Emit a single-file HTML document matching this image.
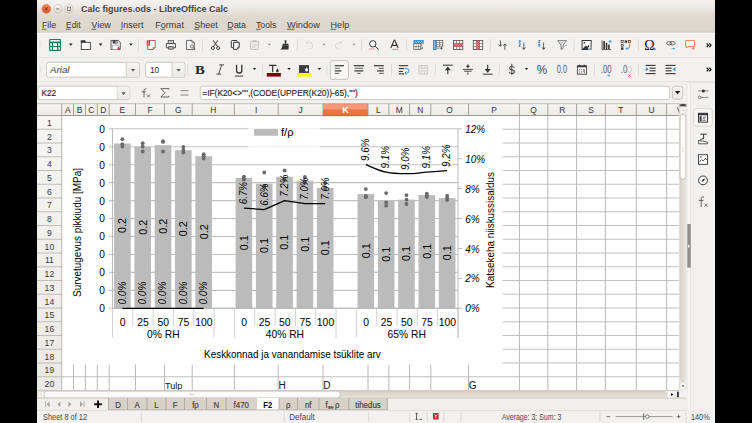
<!DOCTYPE html>
<html lang="en"><head><meta charset="utf-8"><title>Calc figures.ods - LibreOffice Calc</title>
<style>
html,body{margin:0;padding:0;background:#000;width:752px;height:423px;overflow:hidden}
svg{display:block}
svg text{font-family:"Liberation Sans",sans-serif}
</style></head><body>
<svg width="752" height="423" viewBox="0 0 752 423">
<defs>
<linearGradient id="gTitle" x1="0" y1="0" x2="0" y2="1"><stop offset="0" stop-color="#f4f2ef"/><stop offset="0.15" stop-color="#f0ede9"/><stop offset="0.5" stop-color="#e0d9d0"/><stop offset="1" stop-color="#ddd6cd"/></linearGradient>
<linearGradient id="gHdr" x1="0" y1="0" x2="0" y2="1"><stop offset="0" stop-color="#f6f5f3"/><stop offset="1" stop-color="#eceae6"/></linearGradient>
<linearGradient id="gSel" x1="0" y1="0" x2="0" y2="1"><stop offset="0" stop-color="#f28a5f"/><stop offset="1" stop-color="#ec6a3a"/></linearGradient>
<linearGradient id="gClose" x1="0" y1="0" x2="0" y2="1"><stop offset="0" stop-color="#f58a61"/><stop offset="1" stop-color="#e2562a"/></linearGradient>
<linearGradient id="gBtn" x1="0" y1="0" x2="0" y2="1"><stop offset="0" stop-color="#fbfaf9"/><stop offset="1" stop-color="#d9d3ca"/></linearGradient>
<linearGradient id="gScrollV" x1="0" y1="0" x2="1" y2="0"><stop offset="0" stop-color="#d8d1c8"/><stop offset="1" stop-color="#ebe6e0"/></linearGradient>
<linearGradient id="gScrollH" x1="0" y1="0" x2="0" y2="1"><stop offset="0" stop-color="#d6cfc6"/><stop offset="1" stop-color="#e9e4de"/></linearGradient>
<clipPath id="win"><rect x="37" y="0" width="678" height="423"/></clipPath>
</defs>
<rect x="0.00" y="0.00" width="752.00" height="423.00" fill="#000" />
<g clip-path="url(#win)">
<rect x="37.00" y="0.00" width="678.00" height="423.00" fill="#f3f1ef" />
<rect x="37.00" y="0.00" width="678.00" height="32.30" fill="url(#gTitle)" />
<line x1="37.00" y1="32.30" x2="715.00" y2="32.30" stroke="#c9c1b6" stroke-width="0.8" />
<line x1="37.00" y1="33.30" x2="715.00" y2="33.30" stroke="#fbfaf9" stroke-width="1" />
<circle cx="46.3" cy="8.8" r="4.4" fill="url(#gClose)" stroke="#cf5a30" stroke-width="0.5"/>
<path d="M44.7 7.2l3.2 3.2M47.9 7.2l-3.2 3.2" fill="none" stroke="#7a2c10" stroke-width="0.9" />
<circle cx="57.8" cy="8.8" r="4.3" fill="url(#gBtn)" stroke="#c2bbb1" stroke-width="0.6"/>
<circle cx="69.0" cy="8.8" r="4.3" fill="url(#gBtn)" stroke="#c2bbb1" stroke-width="0.6"/>
<line x1="56.00" y1="8.90" x2="59.60" y2="8.90" stroke="#7c766e" stroke-width="0.9" />
<rect x="67.40" y="7.10" width="3.20" height="3.40" fill="none" stroke="#7c766e" stroke-width="0.8" />
<text x="81.00" y="12.30" font-size="9.6" fill="#4a4640" font-weight="bold" textLength="147.00" lengthAdjust="spacingAndGlyphs" >Calc figures.ods - LibreOffice Calc</text>
<text x="41.90" y="28.10" font-size="9.7" fill="#3a3834" textLength="14.40" lengthAdjust="spacingAndGlyphs" >File</text>
<line x1="41.90" y1="29.30" x2="46.50" y2="29.30" stroke="#3a3834" stroke-width="0.7" />
<text x="66.00" y="28.10" font-size="9.7" fill="#3a3834" textLength="14.60" lengthAdjust="spacingAndGlyphs" >Edit</text>
<line x1="66.00" y1="29.30" x2="70.80" y2="29.30" stroke="#3a3834" stroke-width="0.7" />
<text x="91.30" y="28.10" font-size="9.7" fill="#3a3834" textLength="19.60" lengthAdjust="spacingAndGlyphs" >View</text>
<line x1="91.30" y1="29.30" x2="96.30" y2="29.30" stroke="#3a3834" stroke-width="0.7" />
<text x="120.80" y="28.10" font-size="9.7" fill="#3a3834" textLength="22.60" lengthAdjust="spacingAndGlyphs" >Insert</text>
<line x1="120.80" y1="29.30" x2="122.40" y2="29.30" stroke="#3a3834" stroke-width="0.7" />
<text x="155.30" y="28.10" font-size="9.7" fill="#3a3834" textLength="28.60" lengthAdjust="spacingAndGlyphs" >Format</text>
<line x1="160.70" y1="29.30" x2="165.10" y2="29.30" stroke="#3a3834" stroke-width="0.7" />
<text x="194.30" y="28.10" font-size="9.7" fill="#3a3834" textLength="23.40" lengthAdjust="spacingAndGlyphs" >Sheet</text>
<line x1="194.30" y1="29.30" x2="199.30" y2="29.30" stroke="#3a3834" stroke-width="0.7" />
<text x="227.30" y="28.10" font-size="9.7" fill="#3a3834" textLength="18.60" lengthAdjust="spacingAndGlyphs" >Data</text>
<line x1="227.30" y1="29.30" x2="232.70" y2="29.30" stroke="#3a3834" stroke-width="0.7" />
<text x="256.00" y="28.10" font-size="9.7" fill="#3a3834" textLength="20.40" lengthAdjust="spacingAndGlyphs" >Tools</text>
<line x1="256.00" y1="29.30" x2="260.80" y2="29.30" stroke="#3a3834" stroke-width="0.7" />
<text x="287.00" y="28.10" font-size="9.7" fill="#3a3834" textLength="32.80" lengthAdjust="spacingAndGlyphs" >Window</text>
<line x1="287.00" y1="29.30" x2="294.60" y2="29.30" stroke="#3a3834" stroke-width="0.7" />
<text x="330.60" y="28.10" font-size="9.7" fill="#3a3834" textLength="18.60" lengthAdjust="spacingAndGlyphs" >Help</text>
<line x1="330.60" y1="29.30" x2="336.00" y2="29.30" stroke="#3a3834" stroke-width="0.7" />
<line x1="37.00" y1="57.60" x2="715.00" y2="57.60" stroke="#e2ded9" stroke-width="0.8" />
<line x1="37.00" y1="81.60" x2="715.00" y2="81.60" stroke="#e2ded9" stroke-width="0.8" />
<line x1="39.50" y1="42.00" x2="41.50" y2="42.00" stroke="#d8d4ce" stroke-width="0.6" />
<line x1="39.50" y1="43.60" x2="41.50" y2="43.60" stroke="#d8d4ce" stroke-width="0.6" />
<line x1="39.50" y1="45.20" x2="41.50" y2="45.20" stroke="#d8d4ce" stroke-width="0.6" />
<line x1="39.50" y1="46.80" x2="41.50" y2="46.80" stroke="#d8d4ce" stroke-width="0.6" />
<line x1="39.50" y1="67.00" x2="41.50" y2="67.00" stroke="#d8d4ce" stroke-width="0.6" />
<line x1="39.50" y1="68.60" x2="41.50" y2="68.60" stroke="#d8d4ce" stroke-width="0.6" />
<line x1="39.50" y1="70.20" x2="41.50" y2="70.20" stroke="#d8d4ce" stroke-width="0.6" />
<line x1="39.50" y1="71.80" x2="41.50" y2="71.80" stroke="#d8d4ce" stroke-width="0.6" />
<line x1="138.40" y1="39.50" x2="138.40" y2="50.80" stroke="#dedad5" stroke-width="0.9" />
<line x1="202.50" y1="39.50" x2="202.50" y2="50.80" stroke="#dedad5" stroke-width="0.9" />
<line x1="297.30" y1="39.50" x2="297.30" y2="50.80" stroke="#dedad5" stroke-width="0.9" />
<line x1="361.50" y1="39.50" x2="361.50" y2="50.80" stroke="#dedad5" stroke-width="0.9" />
<line x1="406.60" y1="39.50" x2="406.60" y2="50.80" stroke="#dedad5" stroke-width="0.9" />
<line x1="490.30" y1="39.50" x2="490.30" y2="50.80" stroke="#dedad5" stroke-width="0.9" />
<line x1="574.00" y1="39.50" x2="574.00" y2="50.80" stroke="#dedad5" stroke-width="0.9" />
<line x1="638.50" y1="39.50" x2="638.50" y2="50.80" stroke="#dedad5" stroke-width="0.9" />
<line x1="187.80" y1="63.50" x2="187.80" y2="75.50" stroke="#dedad5" stroke-width="0.9" />
<line x1="262.60" y1="63.50" x2="262.60" y2="75.50" stroke="#dedad5" stroke-width="0.9" />
<line x1="327.00" y1="63.50" x2="327.00" y2="75.50" stroke="#dedad5" stroke-width="0.9" />
<line x1="391.50" y1="63.50" x2="391.50" y2="75.50" stroke="#dedad5" stroke-width="0.9" />
<line x1="435.30" y1="63.50" x2="435.30" y2="75.50" stroke="#dedad5" stroke-width="0.9" />
<line x1="499.40" y1="63.50" x2="499.40" y2="75.50" stroke="#dedad5" stroke-width="0.9" />
<line x1="594.40" y1="63.50" x2="594.40" y2="75.50" stroke="#dedad5" stroke-width="0.9" />
<line x1="638.50" y1="63.50" x2="638.50" y2="75.50" stroke="#dedad5" stroke-width="0.9" />
<g transform="translate(49.10 39.00)" ><rect x="0" y="0" width="11.9" height="12" rx="1.1" fill="#1b7f5f"/><rect x="1.2" y="1.1" width="9.5" height="1.4" fill="#fff"/><rect x="1.2" y="4.2" width="1.5" height="2.8" fill="#fff"/><rect x="4" y="4.2" width="3.9" height="2.8" fill="#fff"/><rect x="9.2" y="4.2" width="1.5" height="2.8" fill="#fff"/><rect x="1.2" y="8.1" width="1.5" height="2.7" fill="#fff"/><rect x="4" y="8.1" width="3.9" height="2.7" fill="#fff"/><rect x="9.2" y="8.1" width="1.5" height="2.7" fill="#fff"/></g>
<path d="M69.00 43.55 h3.60 l-1.80 2.10 z" fill="#1e1e1e" />
<g transform="translate(80.80 40.00)" ><rect x="0.45" y="2.3" width="9.1" height="7.2" fill="#fcfcfc" stroke="#343434" stroke-width="0.85"/><path d="M0 0.2h4.2l1.2 2.1h-5.4z" fill="#343434"/></g>
<path d="M98.80 43.55 h3.60 l-1.80 2.10 z" fill="#1e1e1e" />
<g transform="translate(110.60 40.00)" ><path d="M0.45 0.45h7.4l1.8 1.8v7.3h-9.2z" fill="#f6f6f6" stroke="#444" stroke-width="0.85"/><rect x="2.1" y="0.5" width="4.8" height="3.1" fill="#3c3c3c"/><rect x="5" y="1" width="1.1" height="2" fill="#e8e8e8"/><rect x="1.9" y="5.6" width="6.2" height="3.9" fill="#fff" stroke="#8a8a8a" stroke-width="0.5"/><circle cx="8.1" cy="8.4" r="1.25" fill="#e8222c"/></g>
<path d="M129.10 43.55 h3.60 l-1.80 2.10 z" fill="#1e1e1e" />
<g transform="translate(146.50 40.00)" ><path d="M2.6 0.5h6.1v6.9l-2.1 2.1h-5.4v-3.6" fill="#fff" stroke="#d8232d" stroke-width="0.8"/><path d="M8.6 7.2h-2.2v2.2z" fill="#d8232d"/><rect x="0.2" y="0.5" width="3.3" height="5.2" fill="#d8232d"/><path d="M1 4.8l0.85-3.2 0.85 3.2M1.3 3.7h1.1" stroke="#fff" stroke-width="0.4" fill="none"/></g>
<g transform="translate(165.90 40.00)" ><rect x="2.3" y="0.45" width="5.4" height="3.2" fill="#fff" stroke="#444" stroke-width="0.8"/><path d="M0.45 3.6h9.1v4.2h-9.1z" fill="#fafafa" stroke="#3a3a3a" stroke-width="0.9"/><path d="M2.6 1.6h4.8M2.6 2.6h4.8" stroke="#777" stroke-width="0.45"/><rect x="2.3" y="6.3" width="5.4" height="3.2" fill="#3a3a3a"/><rect x="3" y="7.4" width="4" height="1.1" fill="#fff"/></g>
<g transform="translate(186.10 40.00)" ><path d="M0.45 0.45h5.4l2.4 2.4v6.7h-7.8z" fill="#fdfdfd" stroke="#444" stroke-width="0.8"/><path d="M5.85 0.45v2.4h2.4" fill="none" stroke="#444" stroke-width="0.7"/><circle cx="5.9" cy="6.5" r="1.6" fill="#fff" stroke="#444" stroke-width="0.75"/><path d="M7.1 7.7l1.9 1.9" stroke="#444" stroke-width="0.9"/></g>
<g transform="translate(211.00 40.00)" ><path d="M2.2 0.3l4.6 6.6M6.8 0.3l-4.6 6.6" stroke="#343434" stroke-width="1" fill="none"/><circle cx="1.9" cy="8" r="1.5" fill="none" stroke="#343434" stroke-width="0.9"/><circle cx="7.1" cy="8" r="1.5" fill="none" stroke="#343434" stroke-width="0.9"/></g>
<g transform="translate(230.80 40.00)" ><rect x="0.5" y="0.5" width="5.8" height="7.2" rx="0.8" fill="#fff" stroke="#343434" stroke-width="1"/><path d="M2.8 2.3h5.6v5l-2 2h-3.6z" fill="#fff" stroke="#343434" stroke-width="1"/><path d="M8.4 7.3h-2v2z" fill="#343434"/></g>
<g transform="translate(249.90 40.00)" ><rect x="0.5" y="1.2" width="8" height="8.2" rx="0.8" fill="#f0efee" stroke="#c2bfbb" stroke-width="1"/><rect x="2.6" y="0.2" width="3.8" height="2" fill="#c2bfbb"/><path d="M2 4.2h5M2 5.8h5M2 7.4h3" stroke="#c2bfbb" stroke-width="0.6"/></g>
<path d="M267.70 43.65 h3.20 l-1.60 1.90 z" fill="#908d8a" />
<g transform="translate(280.00 40.00)" ><path d="M4.6 0.2h1.8l-0.2 3.6h-1.4z" fill="#343434"/><path d="M2.6 3.8h5.8l0.2 2h-6.2z" fill="#343434"/><path d="M2.2 5.8h6.6l-0.4 3.8h-8.2c1.6-0.8 2-2 2-3.8z" fill="#343434"/></g>
<g transform="translate(305.00 40.00)" ><path d="M1.2 2.6h3.4a3 3 0 0 1 0 6.4h-1.6" fill="none" stroke="#d4d1cd" stroke-width="0.85"/><path d="M2.8 0.6l-2 2 2 2" fill="none" stroke="#d4d1cd" stroke-width="0.85"/></g>
<path d="M322.40 43.65 h3.20 l-1.60 1.90 z" fill="#908d8a" />
<g transform="translate(335.20 40.00)" ><path d="M6.4 2.6h-3a3 3 0 0 0 0 6.4h1.6" fill="none" stroke="#d4d1cd" stroke-width="0.85"/><path d="M4.8 0.6l2 2-2 2" fill="none" stroke="#d4d1cd" stroke-width="0.85"/></g>
<path d="M352.40 43.65 h3.20 l-1.60 1.90 z" fill="#908d8a" />
<g transform="translate(368.80 40.00)" ><circle cx="4" cy="3.8" r="3.2" fill="#fdfdfd" stroke="#343434" stroke-width="1"/><path d="M6.3 6.2l3.4 3.3" stroke="#343434" stroke-width="1"/><path d="M0.4 9h1.2M2.4 9h1.2M4.4 9h1.2" stroke="#f0683c" stroke-width="0.9"/></g>
<g transform="translate(390.20 40.00)" ><path d="M0.6 8l3.4-7.6h0.6l3.4 7.6M2 5.4h4.6" fill="none" stroke="#343434" stroke-width="1.1"/><path d="M2.4 9.4h1.2M4.4 9.4h1.2M6.4 9.4h1.2" stroke="#2aa65a" stroke-width="1"/></g>
<g transform="translate(413.50 40.00)" ><rect x="0.3" y="3.6" width="7" height="6" fill="#fff" stroke="#4a4a4a" stroke-width="0.7"/><path d="M0.3 6.6h7M2.6 3.6v6M5 3.6v6" stroke="#4a4a4a" stroke-width="0.55"/><path d="M8.4 4.4v2" stroke="#4a4a4a" stroke-width="0.6"/><rect x="0" y="0" width="10.2" height="3.8" fill="#2a93e8"/><path d="M1 2.3l1-.9 1 .9 1-.9 1 .9 1-.9 1 .9 1-.9 1 .9" stroke="#fff" stroke-width="0.55" fill="none"/><path d="M6.6 8.2h2.8M8.4 7.2l1.1 1-1.1 1" stroke="#4a4a4a" stroke-width="0.65" fill="none"/></g>
<g transform="translate(433.00 40.00)" ><rect x="3.4" y="0.4" width="6.4" height="6.4" fill="#fff" stroke="#4a4a4a" stroke-width="0.7"/><path d="M3.4 2.6h6.4M3.4 4.7h6.4M6.6 0.4v6.4" stroke="#4a4a4a" stroke-width="0.55"/><path d="M4 8.4h2.4" stroke="#4a4a4a" stroke-width="0.6"/><rect x="0" y="0" width="3.6" height="10" fill="#2a93e8"/><path d="M2.1 1l-.8 1 .8 1-.8 1 .8 1-.8 1 .8 1-.8 1 .8 1" stroke="#fff" stroke-width="0.55" fill="none"/><path d="M7 8.4h2.8M8.4 7v2.8" stroke="#4a4a4a" stroke-width="0.7" fill="none"/></g>
<g transform="translate(453.00 40.00)" ><rect x="0.4" y="0.4" width="9.4" height="9.2" fill="#fff" stroke="#4a4a4a" stroke-width="0.8"/><path d="M0.4 3.4h9.4M0.4 6.6h9.4M3.5 0.4v9.2M6.7 0.4v9.2" stroke="#4a4a4a" stroke-width="0.6"/><rect x="0.9" y="3.5" width="8.4" height="3" fill="#e6404f"/><path d="M1.4 5.3l1-.8 1 .8 1-.8 1 .8 1-.8 1 .8 1-.8" stroke="#fff" stroke-width="0.5" fill="none"/></g>
<g transform="translate(472.90 40.00)" ><rect x="0.4" y="0.4" width="9.4" height="9.2" fill="#fff" stroke="#4a4a4a" stroke-width="0.8"/><path d="M0.4 3.4h9.4M0.4 6.6h9.4M3.5 0.4v9.2M6.7 0.4v9.2" stroke="#4a4a4a" stroke-width="0.6"/><rect x="3.6" y="0.9" width="3" height="8.2" fill="#e6404f"/><path d="M5.4 1.4l-.8 1 .8 1-.8 1 .8 1-.8 1 .8 1-.8 1" stroke="#fff" stroke-width="0.5" fill="none"/></g>
<g transform="translate(498.00 40.00)" ><path d="M2.4 0.4v5.6M0.7 4.4l1.7 1.9 1.7-1.9" fill="none" stroke="#343434" stroke-width="0.8"/><path d="M6.9 9.8v-5.8M5.2 5.8l1.7-1.9 1.7 1.9" fill="none" stroke="#343434" stroke-width="0.8"/></g>
<g transform="translate(518.50 40.00)" ><rect x="0.3" y="0.2" width="1.9" height="2.5" fill="#2a93e8"/><path d="M0.4 3.9h1.7l-1.7 2.4h1.7" fill="none" stroke="#343434" stroke-width="0.65"/><path d="M5.4 2.6v6.8M3.7 7.5l1.7 1.9 1.7-1.9" fill="none" stroke="#343434" stroke-width="0.8"/></g>
<g transform="translate(538.00 40.00)" ><path d="M0.4 0.5h1.7l-1.7 2.3h1.7" fill="none" stroke="#343434" stroke-width="0.65"/><rect x="0.3" y="3.9" width="1.9" height="2.6" fill="#2a93e8"/><path d="M5.6 2.6v6.8M3.9 7.5l1.7 1.9 1.7-1.9" fill="none" stroke="#343434" stroke-width="0.8"/></g>
<g transform="translate(557.30 40.00)" ><path d="M0.5 0.7h8.6l-3.3 4.3v3.4l-2 1.1v-4.5z" fill="#fdfdfd" stroke="#4a4a4a" stroke-width="0.75"/><path d="M2.9 3.3l.8-.8.8.8.8-.8.8.8" stroke="#4a4a4a" stroke-width="0.5" fill="none"/><path d="M7.7 4.7l.9 1.1.9-1.1" stroke="#4a4a4a" stroke-width="0.55" fill="none"/></g>
<g transform="translate(581.60 40.00)" ><rect x="0.5" y="0.5" width="9" height="9" fill="#fff" stroke="#343434" stroke-width="1"/><path d="M0.8 9l3.4-3.6 1.4 1.4 2-2.2v4.4z" fill="#343434"/><circle cx="2.8" cy="2.8" r="0.9" fill="#343434"/><path d="M6.6 7.2h3.2v2.4h-3.2z" fill="#f3f1ef"/><path d="M7 8.3h1.4v-1.1l1.8 1.3-1.8 1.3v-1z" fill="#2a93e8"/></g>
<g transform="translate(601.50 40.00)" ><path d="M0.6 0.4v9.2h9" fill="none" stroke="#343434" stroke-width="0.8"/><rect x="1.8" y="1" width="1.6" height="8" fill="#343434"/><rect x="4.2" y="3" width="1.6" height="6" fill="#343434"/><rect x="6.6" y="4.6" width="1.6" height="4.4" fill="#343434"/><path d="M8.6 0v3M7.1 1.5h3" stroke="#2a93e8" stroke-width="0.9"/></g>
<g transform="translate(620.90 40.00)" ><rect x="0.3" y="0.6" width="2" height="2" fill="none" stroke="#343434" stroke-width="0.7"/><rect x="3.8" y="0.4" width="2.4" height="2.4" fill="#343434"/><rect x="7.4" y="0.6" width="2" height="2" fill="none" stroke="#343434" stroke-width="0.7"/><rect x="0.3" y="4.2" width="2" height="2" fill="none" stroke="#343434" stroke-width="0.7"/><rect x="0.1" y="7.4" width="2.4" height="2.4" fill="#343434"/><path d="M8.6 3.6v3.2a1.8 1.8 0 0 1-1.8 1.8h-1.6M6.2 7.4l-1.2 1.2 1.2 1.2" fill="none" stroke="#2a93e8" stroke-width="0.9"/></g>
<text x="644.20" y="49.70" font-size="14" fill="#161616" style="font-family:'Liberation Serif'" >Ω</text>
<path d="M654 47.4l2.3 1.5-2.3 1.5z" fill="#2a93e8" />
<g transform="translate(665.90 41.00)" ><ellipse cx="3.2" cy="2.2" rx="2.6" ry="1.7" fill="none" stroke="#555" stroke-width="0.8"/><ellipse cx="6.6" cy="2.2" rx="2.6" ry="1.7" fill="none" stroke="#555" stroke-width="0.8"/><path d="M5.6 7.2h1.8v-1l1.8 1.3-1.8 1.3v-1h-1.8z" fill="#2a93e8"/></g>
<g transform="translate(685.00 40.00)" ><path d="M0.6 0.6h9v5.8h-6.6l-1.2 1.6v-1.6h-1.2z" fill="#fdfdfd" stroke="#f0683c" stroke-width="0.85"/><path d="M8.2 6.9v2.8M6.8 8.3h2.8" stroke="#f0683c" stroke-width="0.8"/></g>
<path d="M706.7 43.3l1.7 1.9-1.7 1.9M709.3 43.3l1.7 1.9-1.7 1.9" fill="none" stroke="#111" stroke-width="1.25" />
<path d="M706.7 67.6l1.7 1.9-1.7 1.9M709.3 67.6l1.7 1.9-1.7 1.9" fill="none" stroke="#111" stroke-width="1.25" />
<rect x="46.40" y="62.40" width="93.00" height="14.80" fill="#ffffff" stroke="#c3bcb1" stroke-width="0.8" rx="2.2" />
<path d="M126.30 62.80 h10.50 a2.2 2.2 0 0 1 2.2 2.2 v9.60 a2.2 2.2 0 0 1 -2.2 2.2 h-10.50 z" fill="url(#gHdr)" />
<line x1="126.30" y1="62.80" x2="126.30" y2="76.80" stroke="#c9c3b9" stroke-width="0.8" />
<path d="M130.85 68.90 h4.40 l-2.20 2.60 z" fill="#555" />
<text x="50.00" y="73.00" font-size="9" fill="#3a3a3a" font-style="italic" textLength="19.50" lengthAdjust="spacingAndGlyphs" >Arial</text>
<rect x="145.50" y="62.40" width="39.40" height="14.80" fill="#ffffff" stroke="#c3bcb1" stroke-width="0.8" rx="2.2" />
<path d="M172.10 62.80 h10.20 a2.2 2.2 0 0 1 2.2 2.2 v9.60 a2.2 2.2 0 0 1 -2.2 2.2 h-10.20 z" fill="url(#gHdr)" />
<line x1="172.10" y1="62.80" x2="172.10" y2="76.80" stroke="#c9c3b9" stroke-width="0.8" />
<path d="M176.50 68.90 h4.40 l-2.20 2.60 z" fill="#555" />
<text x="149.90" y="72.80" font-size="9" fill="#2a2a2a" textLength="9.20" lengthAdjust="spacingAndGlyphs" >10</text>
<text x="194.90" y="73.70" font-size="13.2" fill="#262626" font-weight="bold" textLength="9.80" lengthAdjust="spacingAndGlyphs" style="font-family:'Liberation Serif'" >B</text>
<path d="M219.2 64.9h4.8M216.4 74.1h4.8M221.8 64.9l-3.2 9.2" fill="none" stroke="#3c3c3c" stroke-width="0.9" />
<path d="M236.6 64.8v5.6a2.6 2.6 0 0 0 5.2 0v-5.6" fill="none" stroke="#333" stroke-width="1.3" />
<line x1="234.90" y1="76.10" x2="243.30" y2="76.10" stroke="#333" stroke-width="0.9" />
<path d="M252.70 67.95 h3.60 l-1.80 2.10 z" fill="#1e1e1e" />
<path d="M269 65.4h7.4M272.7 65.4v6.8" fill="none" stroke="#333" stroke-width="1.2" />
<path d="M277.4 68.6c.9 1.2 1.3 1.8 1.3 2.5a1.3 1.3 0 0 1-2.6 0c0-.7.4-1.3 1.3-2.5z" fill="#333" />
<rect x="266.80" y="73.00" width="14.00" height="3.60" fill="#7b0000" />
<path d="M287.30 67.95 h3.60 l-1.80 2.10 z" fill="#1e1e1e" />
<rect x="299.00" y="65.10" width="10.00" height="7.60" fill="#3c3c3c" />
<path d="M306.6 67.2c1 1.4 1.5 2.1 1.5 2.9a1.5 1.5 0 0 1-3 0c0-.8.5-1.5 1.5-2.9z" fill="#fff" />
<line x1="299.00" y1="72.40" x2="309.00" y2="72.40" stroke="#1a1a6a" stroke-width="0.7" />
<rect x="296.90" y="73.00" width="14.20" height="3.60" fill="#ffff00" />
<path d="M317.60 67.95 h3.60 l-1.80 2.10 z" fill="#1e1e1e" />
<rect x="330.30" y="60.60" width="18.20" height="18.80" fill="#f8f7f6" stroke="#bdb5aa" stroke-width="0.8" rx="2.4" />
<line x1="334.80" y1="65.70" x2="344.00" y2="65.70" stroke="#2e2e2e" stroke-width="1.15" />
<line x1="334.80" y1="68.30" x2="339.80" y2="68.30" stroke="#6e6e6e" stroke-width="1.15" />
<line x1="334.80" y1="70.90" x2="341.40" y2="70.90" stroke="#2e2e2e" stroke-width="1.15" />
<line x1="334.80" y1="73.40" x2="339.20" y2="73.40" stroke="#6e6e6e" stroke-width="1.15" />
<line x1="353.80" y1="65.70" x2="364.00" y2="65.70" stroke="#2e2e2e" stroke-width="1.15" />
<line x1="354.80" y1="68.30" x2="363.00" y2="68.30" stroke="#6e6e6e" stroke-width="1.15" />
<line x1="354.40" y1="70.90" x2="363.40" y2="70.90" stroke="#2e2e2e" stroke-width="1.15" />
<line x1="357.20" y1="73.40" x2="360.60" y2="73.40" stroke="#6e6e6e" stroke-width="1.15" />
<line x1="374.00" y1="65.70" x2="383.80" y2="65.70" stroke="#2e2e2e" stroke-width="1.15" />
<line x1="378.60" y1="68.30" x2="383.80" y2="68.30" stroke="#6e6e6e" stroke-width="1.15" />
<line x1="377.00" y1="70.90" x2="383.80" y2="70.90" stroke="#2e2e2e" stroke-width="1.15" />
<line x1="379.20" y1="73.40" x2="383.80" y2="73.40" stroke="#6e6e6e" stroke-width="1.15" />
<line x1="398.80" y1="65.70" x2="408.20" y2="65.70" stroke="#343434" stroke-width="1.1" />
<line x1="398.80" y1="68.60" x2="404.20" y2="68.60" stroke="#343434" stroke-width="1.1" />
<line x1="398.80" y1="71.50" x2="402.80" y2="71.50" stroke="#343434" stroke-width="1.1" />
<line x1="398.80" y1="73.90" x2="404.20" y2="73.90" stroke="#343434" stroke-width="1.1" />
<path d="M405 68.6h1.8a2 2 0 0 1 0 4.4h-1.6M406.4 71.4l-1.4 1.6 1.4 1.6" fill="none" stroke="#2a93e8" stroke-width="1" />
<g transform="translate(418.50 65.00)" ><rect x="0.4" y="0.4" width="8.6" height="8.6" fill="#efeeec" stroke="#c4c1bd" stroke-width="0.8"/><path d="M0.4 3.2h8.6M0.4 6.2h8.6M3.3 0.4v2.8M6.1 0.4v2.8M3.3 6.2v2.8M6.1 6.2v2.8" stroke="#c4c1bd" stroke-width="0.6"/><path d="M3.4 4.7h.8M5.2 4.7h.8" stroke="#c4c1bd" stroke-width="0.8"/></g>
<line x1="442.90" y1="65.20" x2="452.80" y2="65.20" stroke="#343434" stroke-width="1" />
<path d="M447.8 74.2v-6.2M446 69.6l1.8-2.2 1.8 2.2z" fill="#343434" stroke="#343434" stroke-width="1.1" />
<line x1="462.90" y1="69.40" x2="472.90" y2="69.40" stroke="#343434" stroke-width="0.9" />
<path d="M467.9 64.2v3M466.5 66l1.4 1.6 1.4-1.6z" fill="#343434" stroke="#343434" stroke-width="0.9" />
<line x1="464.20" y1="71.20" x2="471.60" y2="71.20" stroke="#343434" stroke-width="0.9" />
<path d="M467.9 74.8v-2.4" fill="none" stroke="#343434" stroke-width="0.9" />
<line x1="482.90" y1="74.20" x2="492.50" y2="74.20" stroke="#343434" stroke-width="1" />
<path d="M487.7 64.8v6.2M485.9 69.6l1.8 2.2 1.8-2.2z" fill="#343434" stroke="#343434" stroke-width="1.1" />
<text x="508.30" y="73.60" font-size="11.5" fill="#3a3a3a" textLength="7.00" lengthAdjust="spacingAndGlyphs" >S</text>
<line x1="511.80" y1="63.80" x2="511.80" y2="74.90" stroke="#3a3a3a" stroke-width="0.9" />
<path d="M524.70 67.95 h3.60 l-1.80 2.10 z" fill="#1e1e1e" />
<text x="536.70" y="74.40" font-size="12.4" fill="#444" textLength="10.40" lengthAdjust="spacingAndGlyphs" >%</text>
<text x="556.70" y="73.10" font-size="10" fill="#555" textLength="10.40" lengthAdjust="spacingAndGlyphs" >0.0</text>
<g transform="translate(576.90 64.60)" ><rect x="0.45" y="1.2" width="9.1" height="8.4" fill="#fdfdfd" stroke="#343434" stroke-width="0.85"/><rect x="0.45" y="1.2" width="9.1" height="1.5" fill="#343434"/><path d="M2.6 0v2M7.4 0v2" stroke="#343434" stroke-width="0.9"/><path d="M2 5h1M4 5h1M6 5h1M2 6.6h1M4 6.6h1M6 6.6h1M2 8.2h1M4 8.2h1M7.4 4.6v4" stroke="#343434" stroke-width="0.7"/></g>
<text x="600.80" y="73.00" font-size="10" fill="#555" textLength="10.80" lengthAdjust="spacingAndGlyphs" >.00</text>
<path d="M606.8 75.2h1.8v-1l1.8 1.3-1.8 1.3v-1h-1.8z" fill="#2a93e8" />
<text x="620.80" y="73.00" font-size="10" fill="#666" textLength="6.60" lengthAdjust="spacingAndGlyphs" >.0</text>
<ellipse cx="629.4" cy="69.4" rx="2" ry="3" fill="none" stroke="#c4c1bd" stroke-width="0.8"/>
<path d="M628.4 74.6l2 2M630.4 74.6l-2 2" fill="none" stroke="#e6404f" stroke-width="0.9" />
<line x1="645.60" y1="65.40" x2="655.60" y2="65.40" stroke="#343434" stroke-width="1.1" />
<line x1="649.60" y1="68.20" x2="655.60" y2="68.20" stroke="#343434" stroke-width="1.1" />
<line x1="649.60" y1="70.80" x2="655.60" y2="70.80" stroke="#343434" stroke-width="1.1" />
<line x1="645.60" y1="73.60" x2="655.60" y2="73.60" stroke="#343434" stroke-width="1.1" />
<path d="M645.8 67l2.8 2.2-2.8 2.2z" fill="#2a93e8" />
<line x1="665.60" y1="65.40" x2="675.60" y2="65.40" stroke="#343434" stroke-width="1.1" />
<line x1="665.60" y1="68.20" x2="671.60" y2="68.20" stroke="#343434" stroke-width="1.1" />
<line x1="665.60" y1="70.80" x2="671.60" y2="70.80" stroke="#343434" stroke-width="1.1" />
<line x1="665.60" y1="73.60" x2="675.60" y2="73.60" stroke="#343434" stroke-width="1.1" />
<path d="M675.4 67l-2.8 2.2 2.8 2.2z" fill="#2a93e8" />
<rect x="38.00" y="86.20" width="91.80" height="13.40" fill="#fff" stroke="#c3bcb1" stroke-width="0.8" rx="2.2" />
<line x1="117.30" y1="86.60" x2="117.30" y2="99.20" stroke="#c9c3b9" stroke-width="0.8" />
<path d="M117.7 86.7h9.8a2 2 0 0 1 2 2v8.4a2 2 0 0 1-2 2h-9.8z" fill="url(#gHdr)" />
<path d="M121.40 92.30 h4.40 l-2.20 2.60 z" fill="#555" />
<text x="41.50" y="96.10" font-size="9.5" fill="#2a2a2a" textLength="14.60" lengthAdjust="spacingAndGlyphs" stroke="#2a2a2a" stroke-width="0.15">K22</text>
<path d="M146.4 88.9c-1.6-.3-2.4.4-2.4 1.8v6.8M141.6 91.8h4" fill="none" stroke="#555" stroke-width="0.9" />
<path d="M147 94.4l3 3M150 94.4l-3 3" fill="none" stroke="#555" stroke-width="0.8" />
<path d="M168.9 89.6v-1h-8l4 4.1-4 4.3h8v-1.1" fill="none" stroke="#555" stroke-width="0.9" />
<line x1="180.50" y1="90.70" x2="188.50" y2="90.70" stroke="#777" stroke-width="0.9" />
<line x1="180.50" y1="95.00" x2="188.50" y2="95.00" stroke="#777" stroke-width="0.9" />
<rect x="200.30" y="86.20" width="469.30" height="13.40" fill="#fff" stroke="#c3bcb1" stroke-width="0.8" rx="2.2" />
<text x="202.30" y="96.10" font-size="9.5" fill="#1e1e1e" textLength="155.60" lengthAdjust="spacingAndGlyphs" stroke="#1e1e1e" stroke-width="0.15">=IF(K20&lt;&gt;"",(CODE(UPPER(K20))-65),"")</text>
<rect x="672.40" y="86.40" width="10.40" height="12.80" fill="url(#gHdr)" stroke="#c3bcb1" stroke-width="0.8" rx="2.2" />
<path d="M674.80 91.10 h5.60 l-2.80 3.20 z" fill="#1e1e1e" />
<rect x="37.00" y="115.50" width="642.30" height="275.00" fill="#fff" />
<line x1="73.50" y1="115.50" x2="73.50" y2="390.50" stroke="#b0b0b0" stroke-width="0.9" />
<line x1="85.40" y1="115.50" x2="85.40" y2="390.50" stroke="#b0b0b0" stroke-width="0.9" />
<line x1="97.30" y1="115.50" x2="97.30" y2="390.50" stroke="#b0b0b0" stroke-width="0.9" />
<line x1="109.20" y1="115.50" x2="109.20" y2="390.50" stroke="#b0b0b0" stroke-width="0.9" />
<line x1="135.50" y1="115.50" x2="135.50" y2="390.50" stroke="#b0b0b0" stroke-width="0.9" />
<line x1="164.50" y1="115.50" x2="164.50" y2="390.50" stroke="#b0b0b0" stroke-width="0.9" />
<line x1="192.20" y1="115.50" x2="192.20" y2="390.50" stroke="#b0b0b0" stroke-width="0.9" />
<line x1="234.40" y1="115.50" x2="234.40" y2="390.50" stroke="#b0b0b0" stroke-width="0.9" />
<line x1="278.20" y1="115.50" x2="278.20" y2="390.50" stroke="#b0b0b0" stroke-width="0.9" />
<line x1="323.00" y1="115.50" x2="323.00" y2="390.50" stroke="#b0b0b0" stroke-width="0.9" />
<line x1="368.00" y1="115.50" x2="368.00" y2="390.50" stroke="#b0b0b0" stroke-width="0.9" />
<line x1="388.90" y1="115.50" x2="388.90" y2="390.50" stroke="#b0b0b0" stroke-width="0.9" />
<line x1="409.60" y1="115.50" x2="409.60" y2="390.50" stroke="#b0b0b0" stroke-width="0.9" />
<line x1="430.80" y1="115.50" x2="430.80" y2="390.50" stroke="#b0b0b0" stroke-width="0.9" />
<line x1="468.50" y1="115.50" x2="468.50" y2="390.50" stroke="#b0b0b0" stroke-width="0.9" />
<line x1="519.40" y1="115.50" x2="519.40" y2="390.50" stroke="#b0b0b0" stroke-width="0.9" />
<line x1="547.90" y1="115.50" x2="547.90" y2="390.50" stroke="#b0b0b0" stroke-width="0.9" />
<line x1="576.60" y1="115.50" x2="576.60" y2="390.50" stroke="#b0b0b0" stroke-width="0.9" />
<line x1="605.40" y1="115.50" x2="605.40" y2="390.50" stroke="#b0b0b0" stroke-width="0.9" />
<line x1="636.30" y1="115.50" x2="636.30" y2="390.50" stroke="#b0b0b0" stroke-width="0.9" />
<line x1="666.60" y1="115.50" x2="666.60" y2="390.50" stroke="#b0b0b0" stroke-width="0.9" />
<line x1="692.40" y1="115.50" x2="692.40" y2="390.50" stroke="#b0b0b0" stroke-width="0.9" />
<line x1="62.00" y1="129.25" x2="679.30" y2="129.25" stroke="#b9b9b9" stroke-width="0.9" />
<line x1="62.00" y1="143.00" x2="679.30" y2="143.00" stroke="#b9b9b9" stroke-width="0.9" />
<line x1="62.00" y1="156.75" x2="679.30" y2="156.75" stroke="#b9b9b9" stroke-width="0.9" />
<line x1="62.00" y1="170.50" x2="679.30" y2="170.50" stroke="#b9b9b9" stroke-width="0.9" />
<line x1="62.00" y1="184.25" x2="679.30" y2="184.25" stroke="#b9b9b9" stroke-width="0.9" />
<line x1="62.00" y1="198.00" x2="679.30" y2="198.00" stroke="#b9b9b9" stroke-width="0.9" />
<line x1="62.00" y1="211.75" x2="679.30" y2="211.75" stroke="#b9b9b9" stroke-width="0.9" />
<line x1="62.00" y1="225.50" x2="679.30" y2="225.50" stroke="#b9b9b9" stroke-width="0.9" />
<line x1="62.00" y1="239.25" x2="679.30" y2="239.25" stroke="#b9b9b9" stroke-width="0.9" />
<line x1="62.00" y1="253.00" x2="679.30" y2="253.00" stroke="#b9b9b9" stroke-width="0.9" />
<line x1="62.00" y1="266.75" x2="679.30" y2="266.75" stroke="#b9b9b9" stroke-width="0.9" />
<line x1="62.00" y1="280.50" x2="679.30" y2="280.50" stroke="#b9b9b9" stroke-width="0.9" />
<line x1="62.00" y1="294.25" x2="679.30" y2="294.25" stroke="#b9b9b9" stroke-width="0.9" />
<line x1="62.00" y1="308.00" x2="679.30" y2="308.00" stroke="#b9b9b9" stroke-width="0.9" />
<line x1="62.00" y1="321.75" x2="679.30" y2="321.75" stroke="#b9b9b9" stroke-width="0.9" />
<line x1="62.00" y1="335.50" x2="679.30" y2="335.50" stroke="#b9b9b9" stroke-width="0.9" />
<line x1="62.00" y1="349.25" x2="679.30" y2="349.25" stroke="#b9b9b9" stroke-width="0.9" />
<line x1="62.00" y1="363.00" x2="679.30" y2="363.00" stroke="#b9b9b9" stroke-width="0.9" />
<line x1="62.00" y1="376.75" x2="679.30" y2="376.75" stroke="#b9b9b9" stroke-width="0.9" />
<line x1="62.00" y1="390.50" x2="679.30" y2="390.50" stroke="#b9b9b9" stroke-width="0.9" />
<rect x="62.40" y="116.10" width="440.20" height="248.50" fill="#fff" />
<rect x="37.00" y="103.70" width="642.30" height="11.80" fill="url(#gHdr)" />
<line x1="37.00" y1="103.70" x2="679.30" y2="103.70" stroke="#b8b3ab" stroke-width="0.8" />
<line x1="37.00" y1="115.50" x2="679.30" y2="115.50" stroke="#9d9892" stroke-width="1" />
<text x="67.75" y="112.90" font-size="8.2" fill="#333" text-anchor="middle" textLength="5.60" lengthAdjust="spacingAndGlyphs" >A</text>
<line x1="73.50" y1="103.70" x2="73.50" y2="115.50" stroke="#9d9892" stroke-width="0.9" />
<text x="79.45" y="112.90" font-size="8.2" fill="#333" text-anchor="middle" textLength="5.60" lengthAdjust="spacingAndGlyphs" >B</text>
<line x1="85.40" y1="103.70" x2="85.40" y2="115.50" stroke="#9d9892" stroke-width="0.9" />
<text x="91.35" y="112.90" font-size="8.2" fill="#333" text-anchor="middle" textLength="6.07" lengthAdjust="spacingAndGlyphs" >C</text>
<line x1="97.30" y1="103.70" x2="97.30" y2="115.50" stroke="#9d9892" stroke-width="0.9" />
<text x="103.25" y="112.90" font-size="8.2" fill="#333" text-anchor="middle" textLength="6.07" lengthAdjust="spacingAndGlyphs" >D</text>
<line x1="109.20" y1="103.70" x2="109.20" y2="115.50" stroke="#9d9892" stroke-width="0.9" />
<text x="122.35" y="112.90" font-size="8.2" fill="#333" text-anchor="middle" textLength="5.60" lengthAdjust="spacingAndGlyphs" >E</text>
<line x1="135.50" y1="103.70" x2="135.50" y2="115.50" stroke="#9d9892" stroke-width="0.9" />
<text x="150.00" y="112.90" font-size="8.2" fill="#333" text-anchor="middle" textLength="5.13" lengthAdjust="spacingAndGlyphs" >F</text>
<line x1="164.50" y1="103.70" x2="164.50" y2="115.50" stroke="#9d9892" stroke-width="0.9" />
<text x="178.35" y="112.90" font-size="8.2" fill="#333" text-anchor="middle" textLength="6.53" lengthAdjust="spacingAndGlyphs" >G</text>
<line x1="192.20" y1="103.70" x2="192.20" y2="115.50" stroke="#9d9892" stroke-width="0.9" />
<text x="213.30" y="112.90" font-size="8.2" fill="#333" text-anchor="middle" textLength="6.07" lengthAdjust="spacingAndGlyphs" >H</text>
<line x1="234.40" y1="103.70" x2="234.40" y2="115.50" stroke="#9d9892" stroke-width="0.9" />
<text x="256.30" y="112.90" font-size="8.2" fill="#333" text-anchor="middle" textLength="2.33" lengthAdjust="spacingAndGlyphs" >I</text>
<line x1="278.20" y1="103.70" x2="278.20" y2="115.50" stroke="#9d9892" stroke-width="0.9" />
<text x="300.60" y="112.90" font-size="8.2" fill="#333" text-anchor="middle" textLength="4.20" lengthAdjust="spacingAndGlyphs" >J</text>
<line x1="323.00" y1="103.70" x2="323.00" y2="115.50" stroke="#9d9892" stroke-width="0.9" />
<rect x="323.00" y="103.70" width="45.00" height="12.40" fill="#ee7343" />
<rect x="323.00" y="104.10" width="45.00" height="5.40" fill="#f3997a" />
<rect x="323.00" y="114.90" width="45.00" height="1.20" fill="#e65f2c" />
<text x="345.50" y="113.10" font-size="9" fill="#fff" font-weight="bold" text-anchor="middle" >K</text>
<line x1="368.00" y1="103.70" x2="368.00" y2="115.50" stroke="#9d9892" stroke-width="0.9" />
<text x="378.45" y="112.90" font-size="8.2" fill="#333" text-anchor="middle" textLength="4.67" lengthAdjust="spacingAndGlyphs" >L</text>
<line x1="388.90" y1="103.70" x2="388.90" y2="115.50" stroke="#9d9892" stroke-width="0.9" />
<text x="399.25" y="112.90" font-size="8.2" fill="#333" text-anchor="middle" textLength="7.00" lengthAdjust="spacingAndGlyphs" >M</text>
<line x1="409.60" y1="103.70" x2="409.60" y2="115.50" stroke="#9d9892" stroke-width="0.9" />
<text x="420.20" y="112.90" font-size="8.2" fill="#333" text-anchor="middle" textLength="6.07" lengthAdjust="spacingAndGlyphs" >N</text>
<line x1="430.80" y1="103.70" x2="430.80" y2="115.50" stroke="#9d9892" stroke-width="0.9" />
<text x="449.65" y="112.90" font-size="8.2" fill="#333" text-anchor="middle" textLength="6.53" lengthAdjust="spacingAndGlyphs" >O</text>
<line x1="468.50" y1="103.70" x2="468.50" y2="115.50" stroke="#9d9892" stroke-width="0.9" />
<text x="493.95" y="112.90" font-size="8.2" fill="#333" text-anchor="middle" textLength="5.60" lengthAdjust="spacingAndGlyphs" >P</text>
<line x1="519.40" y1="103.70" x2="519.40" y2="115.50" stroke="#9d9892" stroke-width="0.9" />
<text x="533.65" y="112.90" font-size="8.2" fill="#333" text-anchor="middle" textLength="6.53" lengthAdjust="spacingAndGlyphs" >Q</text>
<line x1="547.90" y1="103.70" x2="547.90" y2="115.50" stroke="#9d9892" stroke-width="0.9" />
<text x="562.25" y="112.90" font-size="8.2" fill="#333" text-anchor="middle" textLength="6.07" lengthAdjust="spacingAndGlyphs" >R</text>
<line x1="576.60" y1="103.70" x2="576.60" y2="115.50" stroke="#9d9892" stroke-width="0.9" />
<text x="591.00" y="112.90" font-size="8.2" fill="#333" text-anchor="middle" textLength="5.60" lengthAdjust="spacingAndGlyphs" >S</text>
<line x1="605.40" y1="103.70" x2="605.40" y2="115.50" stroke="#9d9892" stroke-width="0.9" />
<text x="620.85" y="112.90" font-size="8.2" fill="#333" text-anchor="middle" textLength="5.13" lengthAdjust="spacingAndGlyphs" >T</text>
<line x1="636.30" y1="103.70" x2="636.30" y2="115.50" stroke="#9d9892" stroke-width="0.9" />
<text x="651.45" y="112.90" font-size="8.2" fill="#333" text-anchor="middle" textLength="6.07" lengthAdjust="spacingAndGlyphs" >U</text>
<line x1="666.60" y1="103.70" x2="666.60" y2="115.50" stroke="#9d9892" stroke-width="0.9" />
<text x="679.50" y="112.90" font-size="8.2" fill="#333" text-anchor="middle" textLength="5.60" lengthAdjust="spacingAndGlyphs" >V</text>
<line x1="692.40" y1="103.70" x2="692.40" y2="115.50" stroke="#9d9892" stroke-width="0.9" />
<line x1="61.70" y1="103.70" x2="61.70" y2="390.50" stroke="#9d9892" stroke-width="0.9" />
<rect x="37.00" y="115.90" width="24.30" height="274.60" fill="url(#gHdr)" />
<line x1="37.00" y1="129.25" x2="61.70" y2="129.25" stroke="#b4afa8" stroke-width="0.8" />
<text x="49.40" y="125.88" font-size="8.3" fill="#383838" text-anchor="middle" textLength="4.78" lengthAdjust="spacingAndGlyphs" >1</text>
<line x1="37.00" y1="143.00" x2="61.70" y2="143.00" stroke="#b4afa8" stroke-width="0.8" />
<text x="49.40" y="139.62" font-size="8.3" fill="#383838" text-anchor="middle" textLength="4.78" lengthAdjust="spacingAndGlyphs" >2</text>
<line x1="37.00" y1="156.75" x2="61.70" y2="156.75" stroke="#b4afa8" stroke-width="0.8" />
<text x="49.40" y="153.38" font-size="8.3" fill="#383838" text-anchor="middle" textLength="4.78" lengthAdjust="spacingAndGlyphs" >3</text>
<line x1="37.00" y1="170.50" x2="61.70" y2="170.50" stroke="#b4afa8" stroke-width="0.8" />
<text x="49.40" y="167.12" font-size="8.3" fill="#383838" text-anchor="middle" textLength="4.78" lengthAdjust="spacingAndGlyphs" >4</text>
<line x1="37.00" y1="184.25" x2="61.70" y2="184.25" stroke="#b4afa8" stroke-width="0.8" />
<text x="49.40" y="180.88" font-size="8.3" fill="#383838" text-anchor="middle" textLength="4.78" lengthAdjust="spacingAndGlyphs" >5</text>
<line x1="37.00" y1="198.00" x2="61.70" y2="198.00" stroke="#b4afa8" stroke-width="0.8" />
<text x="49.40" y="194.62" font-size="8.3" fill="#383838" text-anchor="middle" textLength="4.78" lengthAdjust="spacingAndGlyphs" >6</text>
<line x1="37.00" y1="211.75" x2="61.70" y2="211.75" stroke="#b4afa8" stroke-width="0.8" />
<text x="49.40" y="208.38" font-size="8.3" fill="#383838" text-anchor="middle" textLength="4.78" lengthAdjust="spacingAndGlyphs" >7</text>
<line x1="37.00" y1="225.50" x2="61.70" y2="225.50" stroke="#b4afa8" stroke-width="0.8" />
<text x="49.40" y="222.12" font-size="8.3" fill="#383838" text-anchor="middle" textLength="4.78" lengthAdjust="spacingAndGlyphs" >8</text>
<line x1="37.00" y1="239.25" x2="61.70" y2="239.25" stroke="#b4afa8" stroke-width="0.8" />
<text x="49.40" y="235.88" font-size="8.3" fill="#383838" text-anchor="middle" textLength="4.78" lengthAdjust="spacingAndGlyphs" >9</text>
<line x1="37.00" y1="253.00" x2="61.70" y2="253.00" stroke="#b4afa8" stroke-width="0.8" />
<text x="49.40" y="249.62" font-size="8.3" fill="#383838" text-anchor="middle" textLength="9.57" lengthAdjust="spacingAndGlyphs" >10</text>
<line x1="37.00" y1="266.75" x2="61.70" y2="266.75" stroke="#b4afa8" stroke-width="0.8" />
<text x="49.40" y="263.38" font-size="8.3" fill="#383838" text-anchor="middle" textLength="8.93" lengthAdjust="spacingAndGlyphs" >11</text>
<line x1="37.00" y1="280.50" x2="61.70" y2="280.50" stroke="#b4afa8" stroke-width="0.8" />
<text x="49.40" y="277.12" font-size="8.3" fill="#383838" text-anchor="middle" textLength="9.57" lengthAdjust="spacingAndGlyphs" >12</text>
<line x1="37.00" y1="294.25" x2="61.70" y2="294.25" stroke="#b4afa8" stroke-width="0.8" />
<text x="49.40" y="290.88" font-size="8.3" fill="#383838" text-anchor="middle" textLength="9.57" lengthAdjust="spacingAndGlyphs" >13</text>
<line x1="37.00" y1="308.00" x2="61.70" y2="308.00" stroke="#b4afa8" stroke-width="0.8" />
<text x="49.40" y="304.62" font-size="8.3" fill="#383838" text-anchor="middle" textLength="9.57" lengthAdjust="spacingAndGlyphs" >14</text>
<line x1="37.00" y1="321.75" x2="61.70" y2="321.75" stroke="#b4afa8" stroke-width="0.8" />
<text x="49.40" y="318.38" font-size="8.3" fill="#383838" text-anchor="middle" textLength="9.57" lengthAdjust="spacingAndGlyphs" >15</text>
<line x1="37.00" y1="335.50" x2="61.70" y2="335.50" stroke="#b4afa8" stroke-width="0.8" />
<text x="49.40" y="332.12" font-size="8.3" fill="#383838" text-anchor="middle" textLength="9.57" lengthAdjust="spacingAndGlyphs" >16</text>
<line x1="37.00" y1="349.25" x2="61.70" y2="349.25" stroke="#b4afa8" stroke-width="0.8" />
<text x="49.40" y="345.88" font-size="8.3" fill="#383838" text-anchor="middle" textLength="9.57" lengthAdjust="spacingAndGlyphs" >17</text>
<line x1="37.00" y1="363.00" x2="61.70" y2="363.00" stroke="#b4afa8" stroke-width="0.8" />
<text x="49.40" y="359.62" font-size="8.3" fill="#383838" text-anchor="middle" textLength="9.57" lengthAdjust="spacingAndGlyphs" >18</text>
<line x1="37.00" y1="376.75" x2="61.70" y2="376.75" stroke="#b4afa8" stroke-width="0.8" />
<text x="49.40" y="373.38" font-size="8.3" fill="#383838" text-anchor="middle" textLength="9.57" lengthAdjust="spacingAndGlyphs" >19</text>
<line x1="37.00" y1="390.50" x2="61.70" y2="390.50" stroke="#b4afa8" stroke-width="0.8" />
<text x="49.40" y="387.12" font-size="8.3" fill="#383838" text-anchor="middle" textLength="9.57" lengthAdjust="spacingAndGlyphs" >20</text>
<text x="165.00" y="389.20" font-size="9.5" fill="#111" textLength="17.40" lengthAdjust="spacingAndGlyphs" >Tulp</text>
<text x="278.40" y="389.00" font-size="10" fill="#111" >H</text>
<text x="323.20" y="389.00" font-size="10" fill="#111" >D</text>
<text x="468.80" y="389.00" font-size="10" fill="#111" >G</text>
<line x1="108.90" y1="128.80" x2="458.00" y2="128.80" stroke="#c2c2c2" stroke-width="1.1" />
<text x="104.90" y="132.70" font-size="10.2" fill="#000" text-anchor="end" >0</text>
<line x1="108.90" y1="146.75" x2="458.00" y2="146.75" stroke="#c2c2c2" stroke-width="1.1" />
<text x="104.90" y="150.65" font-size="10.2" fill="#000" text-anchor="end" >0</text>
<line x1="108.90" y1="164.70" x2="458.00" y2="164.70" stroke="#c2c2c2" stroke-width="1.1" />
<text x="104.90" y="168.60" font-size="10.2" fill="#000" text-anchor="end" >0</text>
<line x1="108.90" y1="182.65" x2="458.00" y2="182.65" stroke="#c2c2c2" stroke-width="1.1" />
<text x="104.90" y="186.55" font-size="10.2" fill="#000" text-anchor="end" >0</text>
<line x1="108.90" y1="200.60" x2="458.00" y2="200.60" stroke="#c2c2c2" stroke-width="1.1" />
<text x="104.90" y="204.50" font-size="10.2" fill="#000" text-anchor="end" >0</text>
<line x1="108.90" y1="218.55" x2="458.00" y2="218.55" stroke="#c2c2c2" stroke-width="1.1" />
<text x="104.90" y="222.45" font-size="10.2" fill="#000" text-anchor="end" >0</text>
<line x1="108.90" y1="236.50" x2="458.00" y2="236.50" stroke="#c2c2c2" stroke-width="1.1" />
<text x="104.90" y="240.40" font-size="10.2" fill="#000" text-anchor="end" >0</text>
<line x1="108.90" y1="254.45" x2="458.00" y2="254.45" stroke="#c2c2c2" stroke-width="1.1" />
<text x="104.90" y="258.35" font-size="10.2" fill="#000" text-anchor="end" >0</text>
<line x1="108.90" y1="272.40" x2="458.00" y2="272.40" stroke="#c2c2c2" stroke-width="1.1" />
<text x="104.90" y="276.30" font-size="10.2" fill="#000" text-anchor="end" >0</text>
<line x1="108.90" y1="290.35" x2="458.00" y2="290.35" stroke="#c2c2c2" stroke-width="1.1" />
<text x="104.90" y="294.25" font-size="10.2" fill="#000" text-anchor="end" >0</text>
<line x1="108.90" y1="308.30" x2="458.00" y2="308.30" stroke="#c2c2c2" stroke-width="1.1" />
<text x="104.90" y="312.20" font-size="10.2" fill="#000" text-anchor="end" >0</text>
<rect x="248.40" y="122.00" width="71.40" height="28.00" fill="#fff" fill-opacity="0.72"/>
<rect x="254.10" y="129.00" width="23.80" height="6.70" fill="#bbbbbb" />
<text x="281.00" y="136.20" font-size="10.4" fill="#000" textLength="12.60" lengthAdjust="spacingAndGlyphs" >f/ρ</text>
<rect x="114.06" y="143.50" width="16.60" height="164.80" fill="#bbbbbb" />
<rect x="134.39" y="146.90" width="16.60" height="161.40" fill="#bbbbbb" />
<rect x="154.71" y="145.20" width="16.60" height="163.10" fill="#bbbbbb" />
<rect x="175.03" y="150.20" width="16.60" height="158.10" fill="#bbbbbb" />
<rect x="195.36" y="156.20" width="16.60" height="152.10" fill="#bbbbbb" />
<rect x="235.60" y="178.00" width="16.60" height="130.30" fill="#bbbbbb" />
<rect x="255.93" y="183.60" width="16.60" height="124.70" fill="#bbbbbb" />
<rect x="276.25" y="176.80" width="16.60" height="131.50" fill="#bbbbbb" />
<rect x="296.57" y="180.80" width="16.60" height="127.50" fill="#bbbbbb" />
<rect x="316.90" y="188.10" width="16.60" height="120.20" fill="#bbbbbb" />
<rect x="357.54" y="194.10" width="16.60" height="114.20" fill="#bbbbbb" />
<rect x="377.87" y="201.00" width="16.60" height="107.30" fill="#bbbbbb" />
<rect x="398.19" y="199.70" width="16.60" height="108.60" fill="#bbbbbb" />
<rect x="418.51" y="195.10" width="16.60" height="113.20" fill="#bbbbbb" />
<rect x="438.84" y="198.10" width="16.60" height="110.20" fill="#bbbbbb" />
<line x1="112.50" y1="128.80" x2="112.50" y2="308.30" stroke="#b3b3b3" stroke-width="0.9" />
<line x1="458.00" y1="128.80" x2="458.00" y2="337.80" stroke="#b3b3b3" stroke-width="0.9" />
<line x1="112.50" y1="308.30" x2="458.00" y2="308.30" stroke="#b3b3b3" stroke-width="0.9" />
<line x1="458.00" y1="128.80" x2="462.00" y2="128.80" stroke="#b3b3b3" stroke-width="0.9" />
<text x="465.20" y="132.90" font-size="10" fill="#000" font-style="italic" >12%</text>
<line x1="458.00" y1="158.72" x2="462.00" y2="158.72" stroke="#b3b3b3" stroke-width="0.9" />
<text x="465.20" y="162.82" font-size="10" fill="#000" font-style="italic" >10%</text>
<line x1="458.00" y1="188.63" x2="462.00" y2="188.63" stroke="#b3b3b3" stroke-width="0.9" />
<text x="465.20" y="192.73" font-size="10" fill="#000" font-style="italic" >8%</text>
<line x1="458.00" y1="218.55" x2="462.00" y2="218.55" stroke="#b3b3b3" stroke-width="0.9" />
<text x="465.20" y="222.65" font-size="10" fill="#000" font-style="italic" >6%</text>
<line x1="458.00" y1="248.47" x2="462.00" y2="248.47" stroke="#b3b3b3" stroke-width="0.9" />
<text x="465.20" y="252.57" font-size="10" fill="#000" font-style="italic" >4%</text>
<line x1="458.00" y1="278.38" x2="462.00" y2="278.38" stroke="#b3b3b3" stroke-width="0.9" />
<text x="465.20" y="282.48" font-size="10" fill="#000" font-style="italic" >2%</text>
<line x1="458.00" y1="308.30" x2="462.00" y2="308.30" stroke="#b3b3b3" stroke-width="0.9" />
<text x="465.20" y="312.40" font-size="10" fill="#000" font-style="italic" >0%</text>
<line x1="112.50" y1="308.30" x2="112.50" y2="337.80" stroke="#c6c6c6" stroke-width="0.8" />
<line x1="132.82" y1="308.30" x2="132.82" y2="325.80" stroke="#c6c6c6" stroke-width="0.8" />
<line x1="153.15" y1="308.30" x2="153.15" y2="325.80" stroke="#c6c6c6" stroke-width="0.8" />
<line x1="173.47" y1="308.30" x2="173.47" y2="325.80" stroke="#c6c6c6" stroke-width="0.8" />
<line x1="193.79" y1="308.30" x2="193.79" y2="325.80" stroke="#c6c6c6" stroke-width="0.8" />
<line x1="214.12" y1="308.30" x2="214.12" y2="337.80" stroke="#c6c6c6" stroke-width="0.8" />
<line x1="234.44" y1="308.30" x2="234.44" y2="337.80" stroke="#c6c6c6" stroke-width="0.8" />
<line x1="254.76" y1="308.30" x2="254.76" y2="325.80" stroke="#c6c6c6" stroke-width="0.8" />
<line x1="275.09" y1="308.30" x2="275.09" y2="325.80" stroke="#c6c6c6" stroke-width="0.8" />
<line x1="295.41" y1="308.30" x2="295.41" y2="325.80" stroke="#c6c6c6" stroke-width="0.8" />
<line x1="315.74" y1="308.30" x2="315.74" y2="325.80" stroke="#c6c6c6" stroke-width="0.8" />
<line x1="336.06" y1="308.30" x2="336.06" y2="337.80" stroke="#c6c6c6" stroke-width="0.8" />
<line x1="356.38" y1="308.30" x2="356.38" y2="337.80" stroke="#c6c6c6" stroke-width="0.8" />
<line x1="376.71" y1="308.30" x2="376.71" y2="325.80" stroke="#c6c6c6" stroke-width="0.8" />
<line x1="397.03" y1="308.30" x2="397.03" y2="325.80" stroke="#c6c6c6" stroke-width="0.8" />
<line x1="417.35" y1="308.30" x2="417.35" y2="325.80" stroke="#c6c6c6" stroke-width="0.8" />
<line x1="437.68" y1="308.30" x2="437.68" y2="325.80" stroke="#c6c6c6" stroke-width="0.8" />
<line x1="458.00" y1="308.30" x2="458.00" y2="337.80" stroke="#c6c6c6" stroke-width="0.8" />
<text x="122.66" y="326.00" font-size="10.4" fill="#000" text-anchor="middle" >0</text>
<text x="142.99" y="326.00" font-size="10.4" fill="#000" text-anchor="middle" >25</text>
<text x="163.31" y="326.00" font-size="10.4" fill="#000" text-anchor="middle" >50</text>
<text x="183.63" y="326.00" font-size="10.4" fill="#000" text-anchor="middle" >75</text>
<text x="203.96" y="326.00" font-size="10.4" fill="#000" text-anchor="middle" >100</text>
<text x="244.20" y="326.00" font-size="10.4" fill="#000" text-anchor="middle" >0</text>
<text x="264.53" y="326.00" font-size="10.4" fill="#000" text-anchor="middle" >25</text>
<text x="284.85" y="326.00" font-size="10.4" fill="#000" text-anchor="middle" >50</text>
<text x="305.17" y="326.00" font-size="10.4" fill="#000" text-anchor="middle" >75</text>
<text x="325.50" y="326.00" font-size="10.4" fill="#000" text-anchor="middle" >100</text>
<text x="366.14" y="326.00" font-size="10.4" fill="#000" text-anchor="middle" >0</text>
<text x="386.47" y="326.00" font-size="10.4" fill="#000" text-anchor="middle" >25</text>
<text x="406.79" y="326.00" font-size="10.4" fill="#000" text-anchor="middle" >50</text>
<text x="427.11" y="326.00" font-size="10.4" fill="#000" text-anchor="middle" >75</text>
<text x="447.44" y="326.00" font-size="10.4" fill="#000" text-anchor="middle" >100</text>
<text x="163.31" y="338.20" font-size="10.3" fill="#000" text-anchor="middle" >0% RH</text>
<text x="284.85" y="338.20" font-size="10.3" fill="#000" text-anchor="middle" >40% RH</text>
<text x="406.79" y="338.20" font-size="10.3" fill="#000" text-anchor="middle" >65% RH</text>
<text x="292.40" y="357.60" font-size="10" fill="#000" text-anchor="middle" textLength="176.60" lengthAdjust="spacingAndGlyphs" >Keskkonnad ja vanandamise tsüklite arv</text>
<text transform="translate(80.8 232.5) rotate(-90)" font-size="10" fill="#000" text-anchor="middle" textLength="129" lengthAdjust="spacingAndGlyphs">Survetugevus pikkiudu [MPa]</text>
<text transform="translate(493.6 230) rotate(-90)" font-size="10" fill="#000" text-anchor="middle" textLength="116" lengthAdjust="spacingAndGlyphs">Katsekeha niiskussisaldus</text>
<text transform="translate(126.26 225.50) rotate(-90)" font-size="10.8" fill="#000" text-anchor="middle">0.2</text>
<text transform="translate(146.59 227.20) rotate(-90)" font-size="10.8" fill="#000" text-anchor="middle">0.2</text>
<text transform="translate(166.91 226.35) rotate(-90)" font-size="10.8" fill="#000" text-anchor="middle">0.2</text>
<text transform="translate(187.23 228.85) rotate(-90)" font-size="10.8" fill="#000" text-anchor="middle">0.2</text>
<text transform="translate(207.56 231.85) rotate(-90)" font-size="10.8" fill="#000" text-anchor="middle">0.2</text>
<text transform="translate(247.80 242.75) rotate(-90)" font-size="10.8" fill="#000" text-anchor="middle">0.1</text>
<text transform="translate(268.13 245.55) rotate(-90)" font-size="10.8" fill="#000" text-anchor="middle">0.1</text>
<text transform="translate(288.45 242.15) rotate(-90)" font-size="10.8" fill="#000" text-anchor="middle">0.1</text>
<text transform="translate(308.77 244.15) rotate(-90)" font-size="10.8" fill="#000" text-anchor="middle">0.1</text>
<text transform="translate(329.10 247.80) rotate(-90)" font-size="10.8" fill="#000" text-anchor="middle">0.1</text>
<text transform="translate(369.74 250.80) rotate(-90)" font-size="10.8" fill="#000" text-anchor="middle">0.1</text>
<text transform="translate(390.07 254.25) rotate(-90)" font-size="10.8" fill="#000" text-anchor="middle">0.1</text>
<text transform="translate(410.39 253.60) rotate(-90)" font-size="10.8" fill="#000" text-anchor="middle">0.1</text>
<text transform="translate(430.71 251.30) rotate(-90)" font-size="10.8" fill="#000" text-anchor="middle">0.1</text>
<text transform="translate(451.04 252.80) rotate(-90)" font-size="10.8" fill="#000" text-anchor="middle">0.1</text>
<circle cx="122.36" cy="139.20" r="1.9" fill="#6a6a6a"/>
<circle cx="122.36" cy="144.20" r="1.9" fill="#6a6a6a"/>
<circle cx="122.36" cy="146.50" r="1.9" fill="#6a6a6a"/>
<circle cx="142.69" cy="143.20" r="1.9" fill="#6a6a6a"/>
<circle cx="142.69" cy="146.50" r="1.9" fill="#6a6a6a"/>
<circle cx="142.69" cy="151.50" r="1.9" fill="#6a6a6a"/>
<circle cx="163.01" cy="141.20" r="1.9" fill="#6a6a6a"/>
<circle cx="163.01" cy="141.90" r="1.9" fill="#6a6a6a"/>
<circle cx="163.01" cy="151.50" r="1.9" fill="#6a6a6a"/>
<circle cx="183.33" cy="146.90" r="1.9" fill="#6a6a6a"/>
<circle cx="183.33" cy="149.90" r="1.9" fill="#6a6a6a"/>
<circle cx="183.33" cy="152.50" r="1.9" fill="#6a6a6a"/>
<circle cx="203.66" cy="154.20" r="1.9" fill="#6a6a6a"/>
<circle cx="203.66" cy="156.20" r="1.9" fill="#6a6a6a"/>
<circle cx="203.66" cy="158.50" r="1.9" fill="#6a6a6a"/>
<circle cx="243.90" cy="176.60" r="1.9" fill="#6a6a6a"/>
<circle cx="243.90" cy="178.40" r="1.9" fill="#6a6a6a"/>
<circle cx="243.90" cy="179.40" r="1.9" fill="#6a6a6a"/>
<circle cx="264.23" cy="172.50" r="1.9" fill="#6a6a6a"/>
<circle cx="264.23" cy="186.00" r="1.9" fill="#6a6a6a"/>
<circle cx="264.23" cy="187.00" r="1.9" fill="#6a6a6a"/>
<circle cx="284.55" cy="170.50" r="1.9" fill="#6a6a6a"/>
<circle cx="284.55" cy="178.60" r="1.9" fill="#6a6a6a"/>
<circle cx="284.55" cy="180.00" r="1.9" fill="#6a6a6a"/>
<circle cx="304.87" cy="176.80" r="1.9" fill="#6a6a6a"/>
<circle cx="304.87" cy="181.50" r="1.9" fill="#6a6a6a"/>
<circle cx="304.87" cy="182.50" r="1.9" fill="#6a6a6a"/>
<circle cx="325.20" cy="183.10" r="1.9" fill="#6a6a6a"/>
<circle cx="325.20" cy="187.60" r="1.9" fill="#6a6a6a"/>
<circle cx="325.20" cy="189.00" r="1.9" fill="#6a6a6a"/>
<circle cx="365.84" cy="189.10" r="1.9" fill="#6a6a6a"/>
<circle cx="365.84" cy="196.00" r="1.9" fill="#6a6a6a"/>
<circle cx="365.84" cy="197.20" r="1.9" fill="#6a6a6a"/>
<circle cx="386.17" cy="193.10" r="1.9" fill="#6a6a6a"/>
<circle cx="386.17" cy="202.40" r="1.9" fill="#6a6a6a"/>
<circle cx="386.17" cy="205.70" r="1.9" fill="#6a6a6a"/>
<circle cx="406.49" cy="195.10" r="1.9" fill="#6a6a6a"/>
<circle cx="406.49" cy="199.70" r="1.9" fill="#6a6a6a"/>
<circle cx="406.49" cy="204.00" r="1.9" fill="#6a6a6a"/>
<circle cx="426.81" cy="193.60" r="1.9" fill="#6a6a6a"/>
<circle cx="426.81" cy="195.40" r="1.9" fill="#6a6a6a"/>
<circle cx="426.81" cy="197.00" r="1.9" fill="#6a6a6a"/>
<circle cx="447.14" cy="195.70" r="1.9" fill="#6a6a6a"/>
<circle cx="447.14" cy="198.10" r="1.9" fill="#6a6a6a"/>
<circle cx="447.14" cy="200.00" r="1.9" fill="#6a6a6a"/>
<path d="M122.36 308.30 L142.69 308.30 L163.01 308.30 L183.33 308.30 L203.66 308.30" fill="none" stroke="#000" stroke-width="1.3" stroke-linejoin="round"/>
<path d="M243.90 208.08 L264.23 209.57 L284.55 200.60 L304.87 203.59 L325.20 203.59" fill="none" stroke="#000" stroke-width="1.3" stroke-linejoin="round"/>
<path d="M365.84 164.70 C369.23 165.95 379.39 170.68 386.17 172.18 C392.94 173.68 399.72 173.68 406.49 173.68 C413.27 173.68 420.04 172.68 426.81 172.18 C433.59 171.68 443.75 170.93 447.14 170.68" fill="none" stroke="#000" stroke-width="1.3" stroke-linejoin="round"/>
<text transform="translate(125.66 304.50) scale(1.1 1) rotate(-90)" font-size="10" font-style="italic" fill="#000">0.0%</text>
<text transform="translate(145.99 304.50) scale(1.1 1) rotate(-90)" font-size="10" font-style="italic" fill="#000">0.0%</text>
<text transform="translate(166.31 304.50) scale(1.1 1) rotate(-90)" font-size="10" font-style="italic" fill="#000">0.0%</text>
<text transform="translate(186.63 304.50) scale(1.1 1) rotate(-90)" font-size="10" font-style="italic" fill="#000">0.0%</text>
<text transform="translate(206.96 304.50) scale(1.1 1) rotate(-90)" font-size="10" font-style="italic" fill="#000">0.0%</text>
<text transform="translate(247.20 204.28) scale(1.1 1) rotate(-90)" font-size="9.8" font-style="italic" fill="#000">6.7%</text>
<text transform="translate(267.53 205.77) scale(1.1 1) rotate(-90)" font-size="9.8" font-style="italic" fill="#000">6.6%</text>
<text transform="translate(287.85 196.80) scale(1.1 1) rotate(-90)" font-size="9.8" font-style="italic" fill="#000">7.2%</text>
<text transform="translate(308.17 199.79) scale(1.1 1) rotate(-90)" font-size="9.8" font-style="italic" fill="#000">7.0%</text>
<text transform="translate(328.50 199.79) scale(1.1 1) rotate(-90)" font-size="9.8" font-style="italic" fill="#000">7.0%</text>
<text transform="translate(368.84 160.90) scale(1.1 1) rotate(-90)" font-size="9.8" font-style="italic" fill="#000">9.6%</text>
<text transform="translate(389.17 168.38) scale(1.1 1) rotate(-90)" font-size="9.8" font-style="italic" fill="#000">9.1%</text>
<text transform="translate(409.49 169.88) scale(1.1 1) rotate(-90)" font-size="9.8" font-style="italic" fill="#000">9.0%</text>
<text transform="translate(429.81 168.38) scale(1.1 1) rotate(-90)" font-size="9.8" font-style="italic" fill="#000">9.1%</text>
<text transform="translate(450.14 166.88) scale(1.1 1) rotate(-90)" font-size="9.8" font-style="italic" fill="#000">9.2%</text>
<rect x="679.30" y="103.70" width="7.40" height="294.80" fill="#f3f1ef" />
<line x1="679.40" y1="103.70" x2="679.40" y2="390.50" stroke="#d2ccc4" stroke-width="0.6" />
<rect x="680.00" y="113.60" width="6.00" height="268.60" fill="url(#gScrollV)" rx="3" />
<rect x="679.50" y="103.80" width="7.20" height="2.70" fill="#6e6e6e" />
<line x1="681.40" y1="105.10" x2="684.80" y2="105.10" stroke="#111" stroke-width="0.9" />
<rect x="680.00" y="107.00" width="6.00" height="6.60" fill="#faf9f8" stroke="#cfc8be" stroke-width="0.5" rx="1.8" />
<path d="M682 110.8l1-1 1 1" fill="none" stroke="#8a8580" stroke-width="0.6" />
<rect x="680.10" y="114.50" width="5.80" height="64.60" fill="#fbfaf9" stroke="#b4ada3" stroke-width="0.7" rx="2.6" />
<path d="M682.2 148.2h1.6M682.2 149.8h1.6M682.2 151.4h1.6" fill="none" stroke="#bcb5ab" stroke-width="0.5" />
<rect x="680.00" y="382.60" width="6.00" height="7.60" fill="#faf9f8" stroke="#cfc8be" stroke-width="0.5" rx="1.8" />
<path d="M681.6 385.4h2.8l-1.4 1.7z" fill="#222" />
<rect x="686.70" y="82.20" width="4.20" height="328.00" fill="#f7f6f5" />
<line x1="686.90" y1="82.20" x2="686.90" y2="410.00" stroke="#dcd8d3" stroke-width="0.6" />
<line x1="690.80" y1="82.20" x2="690.80" y2="410.00" stroke="#dcd8d3" stroke-width="0.8" />
<rect x="687.30" y="224.00" width="3.40" height="43.60" fill="#8d8d8d" />
<path d="M688 244.4l2 1.8-2 1.8z" fill="#fff" />
<rect x="691.20" y="82.20" width="24.00" height="328.00" fill="#f3f1ef" />
<line x1="686.90" y1="82.20" x2="715.00" y2="82.20" stroke="#dcd8d3" stroke-width="0.7" />
<line x1="698.20" y1="90.90" x2="708.40" y2="90.90" stroke="#555" stroke-width="0.7" />
<circle cx="703.4" cy="90.9" r="1.5" fill="#333"/>
<line x1="700.60" y1="97.40" x2="708.40" y2="97.40" stroke="#555" stroke-width="0.7" />
<circle cx="699.6" cy="97.4" r="1.3" fill="#fff" stroke="#444" stroke-width="0.7"/>
<line x1="696.00" y1="105.70" x2="710.00" y2="105.70" stroke="#e3dfda" stroke-width="0.7" />
<rect x="693.70" y="108.60" width="18.60" height="17.60" fill="#f7f6f5" stroke="#d6d0c8" stroke-width="0.8" rx="2.4" />
<g transform="translate(698.00 112.80)" ><rect x="0.5" y="0.5" width="9" height="8.8" fill="#fff" stroke="#343434" stroke-width="1"/><rect x="0.5" y="0.5" width="9" height="2" fill="#343434"/><rect x="1.6" y="3.4" width="2" height="5" fill="#343434"/><path d="M4.6 4.4h3.4M4.6 6h2.4M4.6 7.6h3" stroke="#343434" stroke-width="0.7"/></g>
<g transform="translate(698.00 133.60)" ><path d="M2.4 0.6h6.4M5.6 0.6v5" stroke="#343434" stroke-width="1" fill="none"/><path d="M0.6 10.2v-3.4l8.8 1.6v1.8z" fill="#fdfdfd" stroke="#343434" stroke-width="0.8"/><path d="M2 6.4l3-1.6" stroke="#343434" stroke-width="0.9"/></g>
<g transform="translate(698.00 154.20)" ><rect x="0.5" y="0.5" width="9" height="9.6" fill="#fff" stroke="#343434" stroke-width="0.9"/><path d="M1 8.4l2.6-3 1.6 1.4 2.2-2.6 1.8 1.6" fill="none" stroke="#343434" stroke-width="0.8"/><circle cx="2.8" cy="2.8" r="0.8" fill="#343434"/></g>
<g transform="translate(698.00 175.00)" ><circle cx="5" cy="5.4" r="4.4" fill="#fff" stroke="#343434" stroke-width="1"/><path d="M3.4 7l1-2.6 2.6-1-1 2.6z" fill="#343434"/></g>
<path d="M704 197c-1.8-.4-2.8.4-2.8 2v8M698.8 200.4h4.6" fill="none" stroke="#555" stroke-width="0.9" />
<path d="M704.4 203.6l3.2 3.2M707.6 203.6l-3.2 3.2" fill="none" stroke="#555" stroke-width="0.8" />
<rect x="37.00" y="390.50" width="649.70" height="7.70" fill="#f3f1ef" />
<line x1="37.00" y1="390.60" x2="679.30" y2="390.60" stroke="#c9c3ba" stroke-width="0.6" />
<rect x="37.60" y="391.10" width="630.00" height="7.00" fill="url(#gScrollH)" rx="3.5" />
<rect x="37.70" y="391.10" width="8.00" height="7.00" fill="#f7f5f3" stroke="#d2cbc1" stroke-width="0.6" rx="3.2" />
<path d="M41.2 393.2l-1.2 1.3 1.2 1.3" fill="none" stroke="#aaa" stroke-width="0.6" />
<rect x="43.80" y="391.10" width="296.60" height="7.00" fill="#fcfbfa" stroke="#b9b2a8" stroke-width="0.7" rx="3.4" />
<path d="M190.4 393.6v2M192 393.6v2M193.6 393.6v2" fill="none" stroke="#bcb5ab" stroke-width="0.5" />
<rect x="668.20" y="391.30" width="8.00" height="6.50" fill="#f8f7f5" rx="1.6" />
<path d="M671 392.9l2.6 1.7-2.6 1.7z" fill="#222" />
<rect x="677.20" y="391.60" width="1.50" height="5.70" fill="#111" />
<rect x="37.00" y="398.10" width="649.70" height="12.00" fill="#f1efec" />
<line x1="37.00" y1="398.10" x2="686.70" y2="398.10" stroke="#bdb7ae" stroke-width="0.7" />
<path d="M45.6 401.2v6" fill="none" stroke="#a9a6a2" stroke-width="0.9" />
<path d="M49.6 401.2l-3 3 3 3z" fill="#a9a6a2" />
<path d="M60.4 401.2l-3 3 3 3z" fill="#a9a6a2" />
<path d="M68.4 401.2l3 3-3 3z" fill="#a9a6a2" />
<path d="M80 401.2l3 3-3 3z" fill="#a9a6a2" />
<path d="M84 401.2v6" fill="none" stroke="#a9a6a2" stroke-width="0.9" />
<path d="M98 400.4v7.6M94.2 404.2h7.6" fill="none" stroke="#111" stroke-width="2" />
<rect x="108.50" y="398.10" width="278.80" height="11.90" fill="#d8d1c8" />
<text x="118.00" y="407.60" font-size="8.8" fill="#45413c" text-anchor="middle" textLength="5.71" lengthAdjust="spacingAndGlyphs" stroke="#45413c" stroke-width="0.18">D</text>
<line x1="127.50" y1="398.10" x2="127.50" y2="410.00" stroke="#a7a197" stroke-width="0.8" />
<text x="137.25" y="407.60" font-size="8.8" fill="#45413c" text-anchor="middle" textLength="5.27" lengthAdjust="spacingAndGlyphs" stroke="#45413c" stroke-width="0.18">A</text>
<line x1="147.00" y1="398.10" x2="147.00" y2="410.00" stroke="#a7a197" stroke-width="0.8" />
<text x="156.50" y="407.60" font-size="8.8" fill="#45413c" text-anchor="middle" textLength="4.39" lengthAdjust="spacingAndGlyphs" stroke="#45413c" stroke-width="0.18">L</text>
<line x1="166.00" y1="398.10" x2="166.00" y2="410.00" stroke="#a7a197" stroke-width="0.8" />
<text x="175.25" y="407.60" font-size="8.8" fill="#45413c" text-anchor="middle" textLength="4.83" lengthAdjust="spacingAndGlyphs" stroke="#45413c" stroke-width="0.18">F</text>
<line x1="184.50" y1="398.10" x2="184.50" y2="410.00" stroke="#a7a197" stroke-width="0.8" />
<text x="195.50" y="407.60" font-size="8.8" fill="#45413c" text-anchor="middle" textLength="6.69" lengthAdjust="spacingAndGlyphs" stroke="#45413c" stroke-width="0.18">fρ</text>
<line x1="206.50" y1="398.10" x2="206.50" y2="410.00" stroke="#a7a197" stroke-width="0.8" />
<text x="216.25" y="407.60" font-size="8.8" fill="#45413c" text-anchor="middle" textLength="5.71" lengthAdjust="spacingAndGlyphs" stroke="#45413c" stroke-width="0.18">N</text>
<line x1="226.00" y1="398.10" x2="226.00" y2="410.00" stroke="#a7a197" stroke-width="0.8" />
<text x="241.30" y="407.60" font-size="8.8" fill="#45413c" text-anchor="middle" textLength="15.38" lengthAdjust="spacingAndGlyphs" stroke="#45413c" stroke-width="0.18">f470</text>
<line x1="256.60" y1="398.10" x2="256.60" y2="410.00" stroke="#a7a197" stroke-width="0.8" />
<rect x="256.60" y="398.10" width="22.40" height="11.90" fill="#ffffff" />
<text x="267.80" y="407.60" font-size="8.6" fill="#000" font-weight="bold" text-anchor="middle" textLength="8.87" lengthAdjust="spacingAndGlyphs" >F2</text>
<line x1="279.00" y1="398.10" x2="279.00" y2="410.00" stroke="#a7a197" stroke-width="0.8" />
<text x="288.25" y="407.60" font-size="8.8" fill="#45413c" text-anchor="middle" textLength="4.49" lengthAdjust="spacingAndGlyphs" stroke="#45413c" stroke-width="0.18">ρ</text>
<line x1="297.50" y1="398.10" x2="297.50" y2="410.00" stroke="#a7a197" stroke-width="0.8" />
<text x="308.25" y="407.60" font-size="8.8" fill="#45413c" text-anchor="middle" textLength="6.59" lengthAdjust="spacingAndGlyphs" stroke="#45413c" stroke-width="0.18">nf</text>
<line x1="319.00" y1="398.10" x2="319.00" y2="410.00" stroke="#a7a197" stroke-width="0.8" />
<text x="325.60" y="407.60" font-size="8.8" fill="#45413c" textLength="2.20" lengthAdjust="spacingAndGlyphs" stroke="#45413c" stroke-width="0.18">f</text>
<text x="328.20" y="408.60" font-size="4.8" fill="#45413c" stroke="#45413c" stroke-width="0.18">вн</text>
<text x="335.00" y="407.60" font-size="8.8" fill="#45413c" textLength="4.40" lengthAdjust="spacingAndGlyphs" stroke="#45413c" stroke-width="0.18">ρ</text>
<line x1="348.70" y1="398.10" x2="348.70" y2="410.00" stroke="#a7a197" stroke-width="0.8" />
<text x="368.00" y="407.60" font-size="8.8" fill="#45413c" text-anchor="middle" textLength="25.48" lengthAdjust="spacingAndGlyphs" stroke="#45413c" stroke-width="0.18">tihedus</text>
<line x1="387.30" y1="398.10" x2="387.30" y2="410.00" stroke="#a7a197" stroke-width="0.8" />
<line x1="108.50" y1="398.10" x2="108.50" y2="410.00" stroke="#a7a197" stroke-width="0.8" />
<line x1="108.50" y1="410.00" x2="387.30" y2="410.00" stroke="#a7a197" stroke-width="0.8" />
<line x1="256.60" y1="398.30" x2="279.00" y2="398.30" stroke="#fff" stroke-width="0.8" />
<rect x="37.00" y="410.40" width="678.00" height="12.60" fill="#f3f1ef" />
<line x1="37.00" y1="410.40" x2="686.70" y2="410.40" stroke="#d9d4ce" stroke-width="0.7" />
<line x1="141.30" y1="412.00" x2="141.30" y2="422.00" stroke="#d6d2cc" stroke-width="0.8" />
<line x1="284.20" y1="412.00" x2="284.20" y2="422.00" stroke="#d6d2cc" stroke-width="0.8" />
<line x1="368.70" y1="412.00" x2="368.70" y2="422.00" stroke="#d6d2cc" stroke-width="0.8" />
<line x1="409.60" y1="412.00" x2="409.60" y2="422.00" stroke="#d6d2cc" stroke-width="0.8" />
<line x1="427.20" y1="412.00" x2="427.20" y2="422.00" stroke="#d6d2cc" stroke-width="0.8" />
<line x1="443.80" y1="412.00" x2="443.80" y2="422.00" stroke="#d6d2cc" stroke-width="0.8" />
<line x1="461.00" y1="412.00" x2="461.00" y2="422.00" stroke="#d6d2cc" stroke-width="0.8" />
<line x1="599.90" y1="412.00" x2="599.90" y2="422.00" stroke="#d6d2cc" stroke-width="0.8" />
<line x1="686.00" y1="412.00" x2="686.00" y2="422.00" stroke="#d6d2cc" stroke-width="0.8" />
<text x="43.00" y="419.90" font-size="8.8" fill="#474747" textLength="44.00" lengthAdjust="spacingAndGlyphs" >Sheet 8 of 12</text>
<text x="289.20" y="419.90" font-size="8.8" fill="#474747" textLength="25.60" lengthAdjust="spacingAndGlyphs" >Default</text>
<path d="M415.6 413.4h2M416.6 413.4v6M415.6 419.4h2M419.4 419.4h2.6" fill="none" stroke="#333" stroke-width="0.8" />
<rect x="433.00" y="413.00" width="5.60" height="6.40" fill="#d8232d" rx="0.5" />
<path d="M434.4 414.4l1.4 1.6 1.4-1.6M435.8 416v2.2" fill="none" stroke="#fff" stroke-width="0.8" />
<text x="501.70" y="419.90" font-size="8.8" fill="#474747" textLength="59.60" lengthAdjust="spacingAndGlyphs" >Average: 3; Sum: 3</text>
<line x1="606.60" y1="416.60" x2="610.00" y2="416.60" stroke="#555" stroke-width="0.8" />
<line x1="615.60" y1="416.60" x2="672.60" y2="416.60" stroke="#777" stroke-width="0.7" />
<line x1="643.70" y1="413.40" x2="643.70" y2="419.80" stroke="#444" stroke-width="0.8" />
<circle cx="647.3" cy="416.6" r="1.7" fill="#fff" stroke="#444" stroke-width="0.7"/>
<path d="M676.8 416.6h3.6M678.6 414.8v3.6" fill="none" stroke="#555" stroke-width="0.8" />
<text x="691.00" y="419.90" font-size="8.8" fill="#474747" textLength="18.60" lengthAdjust="spacingAndGlyphs" >140%</text>
</g>
</svg>
</body></html>
